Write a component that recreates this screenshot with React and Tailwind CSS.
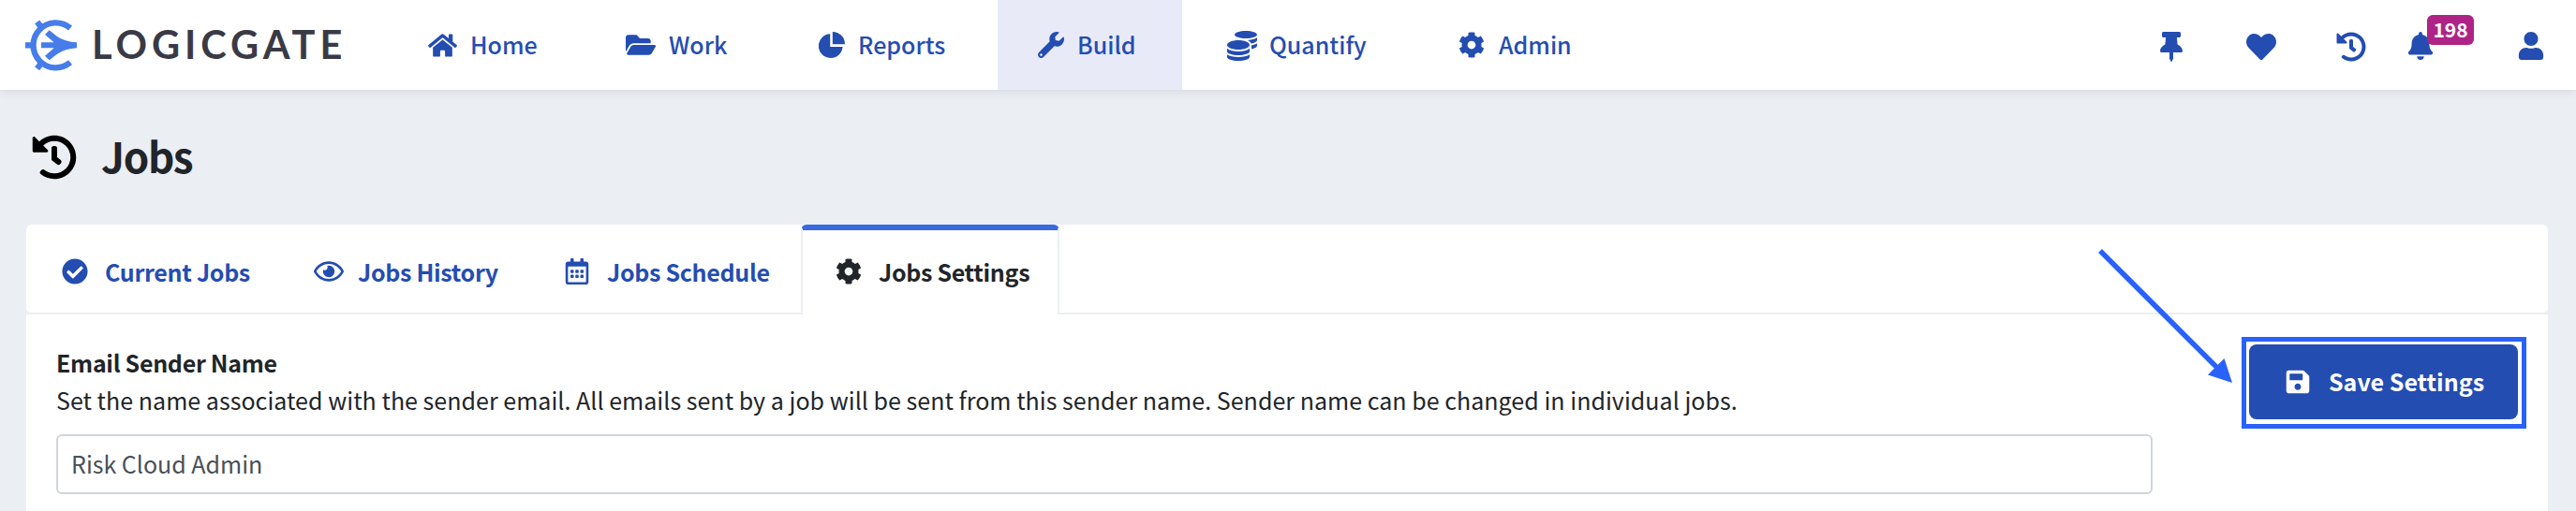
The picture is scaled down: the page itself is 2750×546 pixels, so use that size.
import React from "react";
import {
  FaHome,
  FaFolderOpen,
  FaWrench,
  FaCoins,
  FaCog,
  FaThumbtack,
  FaHeart,
  FaHistory,
  FaBell,
  FaUser,
  FaCheckCircle,
  FaRegEye,
  FaRegCalendarAlt,
  FaSave,
} from "react-icons/fa";

function LogoMark() {
  return (
    <svg className="h-[57px] w-[55px] shrink-0" viewBox="21 30 165 171" fill="none">
      <g stroke="#467de8" strokeWidth="19">
        <path d="M165 60A72 72 0 1 0 165 170" />
        <path d="M21 115H48" />
        <path d="M59 40L74 60" />
        <path d="M59 190L74 170" />
      </g>
      <path
        fill="#467de8"
        d="M98 67L122 86Q148 104 186 106V124Q148 126 122 144L98 163L84 149L113 124H72V106H113L84 81Z"
      />
    </svg>
  );
}

function PieIcon({ className }) {
  return (
    <svg className={className} viewBox="0 0 28 28" fill="currentColor">
      <path d="M12.2 2.2V16H25.6A12.9 12.9 0 1 1 12.2 2.2Z" />
      <path d="M14.8 0A13.2 13.2 0 0 1 28 13.2H14.8Z" />
    </svg>
  );
}

const nav = [
  { label: "Home", Icon: FaHome, size: "size-[31px]", box: "w-[212px] pl-[39px]", gap: "ml-[12px]" },
  { label: "Work", Icon: FaFolderOpen, size: "size-[32px]", box: "w-[204px] pl-[39px]", gap: "ml-[12px]" },
  { label: "Reports", Icon: PieIcon, size: "size-[28px]", box: "w-[234px] pl-[39px]", gap: "ml-[10px]" },
  { label: "Build", Icon: FaWrench, size: "size-[28px]", box: "w-[197px] pl-[39px] bg-[#e8ebf7]", gap: "ml-[10px]" },
  { label: "Quantify", Icon: FaCoins, size: "size-[32px] mt-[2px]", box: "w-[252px] pl-[46px]", gap: "ml-[11px]" },
  { label: "Admin", Icon: FaCog, size: "size-[28px]", box: "w-[200px] pl-[39px]", gap: "ml-[11px]" },
];

function Header() {
  return (
    <header className="relative z-10 flex h-[96px] shrink-0 bg-white shadow-[0_1px_10px_rgba(60,70,90,0.14)]">
      <div className="flex w-[415px] items-center pl-[27px]">
        <LogoMark />
        <span className="mb-[2px] ml-[16px] font-[Lato,sans-serif] text-[41.5px] leading-[60px] font-bold tracking-[4.95px] text-[#3a3a46]">
          LOGICGATE
        </span>
      </div>
      <nav className="flex text-[25px] font-medium text-[#244db2]">
        {nav.map(({ label, Icon, size, box, gap }) => (
          <a key={label} className={`flex items-center ${box}`}>
            <span className="flex w-[36px] items-center justify-center">
              <Icon className={size} />
            </span>
            <span className={`mb-[2px] leading-[36px] ${gap}`}>{label}</span>
          </a>
        ))}
      </nav>
      <div className="ml-auto flex items-center pr-[33px] text-[#244db2]">
        <FaThumbtack className="mt-[3px] size-[32px]" />
        <FaHeart className="mt-[3px] ml-[64px] size-[32px]" />
        <FaHistory className="mt-[3px] ml-[64px] size-[32px]" />
        <span className="relative mt-[2px] ml-[43px]">
          <FaBell className="size-[30px]" />
          <span className="absolute -top-[18px] left-[22px] flex h-[32px] w-[50px] items-center justify-center rounded-[6px] bg-[#ae2386] pb-[2px] text-[21px] leading-[30px] font-bold text-white">
            198
          </span>
        </span>
        <FaUser className="mt-[2px] ml-[88px] size-[30px]" />
      </div>
    </header>
  );
}

function Tab({ Icon, icon, label, box, gap }) {
  return (
    <a className={`flex items-center ${box}`}>
      <Icon className={`mt-[6px] ${icon}`} />
      <span className={`mt-[5px] leading-[36px] whitespace-nowrap ${gap}`}>{label}</span>
    </a>
  );
}

function Tabs() {
  return (
    <div className="flex h-[96px] rounded-[6px] border-b-2 border-[#ebeff4] bg-white text-[25px] font-bold tracking-[-0.3px] text-[#244db2]">
      <Tab Icon={FaCheckCircle} icon="size-[28px]" label="Current Jobs" box="w-[269px] pl-[38px]" gap="ml-[18px]" />
      <Tab Icon={FaRegEye} icon="size-[32px]" label="Jobs History" box="w-[267px] pl-[38px]" gap="ml-[15px]" />
      <Tab Icon={FaRegCalendarAlt} icon="size-[28px]" label="Jobs Schedule" box="w-[291px] pl-[38px]" gap="ml-[18px]" />
      <Tab
        Icon={FaCog}
        icon="size-[28px]"
        label="Jobs Settings"
        box="-mb-[2px] w-[276px] rounded-t-[6px] border-x-2 border-t-[6px] border-x-[#ebeff4] border-t-[#3869e3] bg-white pb-[8px] pl-[35px] text-[#212529]"
        gap="ml-[18px]"
      />
    </div>
  );
}

function Pointer() {
  return (
    <svg className="absolute top-[264px] left-[2236px] h-[150px] w-[152px]" viewBox="0 0 152 150">
      <path d="M6 4L130 128" stroke="#2862fa" strokeWidth="5.5" />
      <path d="M147 145L138.5 119L121 136.5Z" fill="#2862fa" />
    </svg>
  );
}

export default function App() {
  return (
    <div className="relative flex h-[546px] w-[2750px] flex-col overflow-hidden bg-[#ebeef3] font-['Noto_Sans_CJK_SC',sans-serif]">
      <Header />
      <div className="flex h-[144px] shrink-0 items-center pl-[34px]">
        <FaHistory className="size-[48px] text-black" />
        <h1 className="mb-[4px] ml-[26px] text-[44px] leading-[64px] font-bold tracking-[-1.3px] text-[#212529]">Jobs</h1>
      </div>
      <main className="mr-[30px] ml-[28px] flex-1">
        <Tabs />
        <section className="flex h-[300px] justify-between bg-white pr-[23px] pl-[32px] text-[#212529]">
          <div className="w-[2238px] pt-[31px]">
            <h2 className="text-[25px] leading-[40px] font-bold tracking-[-0.3px]">Email Sender Name</h2>
            <p className="text-[25px] leading-[40px] tracking-[0.03px] whitespace-nowrap">
              Set the name associated with the sender email. All emails sent by a job will be sent from this sender name. Sender
              name can be changed in individual jobs.
            </p>
            <div className="mt-[17px] flex h-[64px] items-center rounded-[6px] border-2 border-[#d0d5dc] pb-[2px] pl-[14px] text-[25px] leading-[36px] text-[#495057]">
              Risk Cloud Admin
            </div>
          </div>
          <div className="mt-[24px] h-[98px] w-[304px] border-[5px] border-[#2862fa] pt-[3px] pl-[3px]">
            <button className="flex h-[80px] w-[287px] items-center rounded-[8px] bg-[#244db2] pl-[38px] text-[25px] font-bold text-white">
              <FaSave className="size-[28px]" />
              <span className="mb-[2px] ml-[19px] leading-[36px]">Save Settings</span>
            </button>
          </div>
        </section>
      </main>
      <Pointer />
    </div>
  );
}
